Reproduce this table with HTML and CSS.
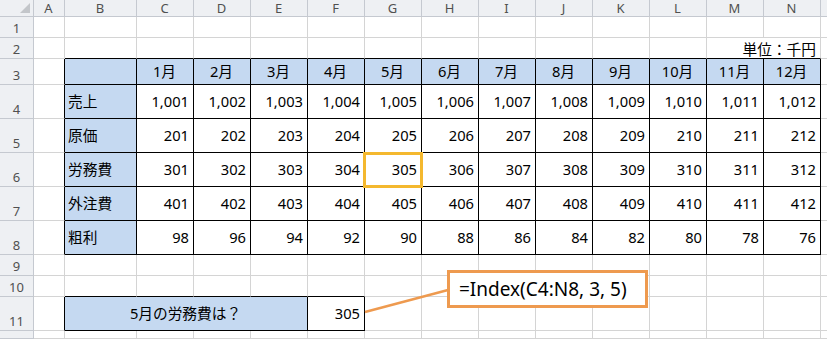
FILE: index.html
```html
<!DOCTYPE html>
<html lang="ja">

<head>
    <meta charset="UTF-8">
    <meta name="viewport" content="width=device-width, initial-scale=1.0">
    <title>INDEX関数</title>
    <link rel="stylesheet" href="styles.css">
</head>

<body>
    <div class="sheet" id="sheet">
        <svg class="leader" width="827" height="339">
            <line x1="365" y1="312" x2="448" y2="290" stroke="#EE9A4F" stroke-width="2.5" />
        </svg>
        <div class="callout">=Index(C4:N8, 3, 5)</div>
    </div>
    <script>
        const sheet = document.getElementById('sheet');
        const labels = ['売上', '原価', '労務費', '外注費', '粗利'];

        function add(text, cls) {
            const div = document.createElement('div');
            div.className = 'cell ' + cls;
            div.textContent = text;
            sheet.appendChild(div);
        }

        function value(row, i) {
            if (row == 4) return (1001 + i).toLocaleString('en-US');
            if (row == 8) return String(98 - 2 * i);
            return String((row - 3) * 100 + 1 + i);
        }

        // column headers
        add('', 'corner');
        'ABCDEFGHIJKLMN'.split('').concat(['']).forEach(l => add(l, 'col-head'));

        for (let r = 1; r <= 12; r++) {
            add(r < 12 ? r : '', 'row-head');
            for (let c = 0; c < 15; c++) {
                if (r == 2 && c == 13) continue;
                if (r == 11 && c >= 2 && c <= 4) continue;
                let text = '';
                let cls = '';
                if (r == 2 && c >= 1 && c <= 13) cls += ' edge-b';
                if (r == 10 && c >= 1 && c <= 5) cls += ' edge-b';
                if (((r >= 3 && r <= 8) || r == 11) && c == 0) cls += ' edge-r';
                if (r == 2 && c == 12) {
                    text = '単位：千円';
                    cls += ' unit span2';
                }
                if (r >= 3 && r <= 8 && c >= 1 && c <= 13) {
                    cls += ' box';
                    if (c == 1) {
                        cls += ' head';
                        text = r > 3 ? labels[r - 4] : '';
                    } else if (r == 3) {
                        cls += ' head center';
                        text = (c - 1) + '月';
                    } else {
                        cls += ' num';
                        text = value(r, c - 2);
                    }
                }
                if (r == 6 && c == 6) cls += ' selected';
                if (r == 11 && c == 1) {
                    cls += ' box head center span4';
                    text = '5月の労務費は？';
                }
                if (r == 11 && c == 5) {
                    cls += ' box num';
                    text = '305';
                }
                add(text, cls);
            }
        }
    </script>
</body>

</html>
```

FILE: styles.css
```css
* {
    box-sizing: border-box;
}

body {
    margin: 0;
    background-color: white;
    color: black;
    font-family: "Noto Sans", "Noto Sans CJK JP", sans-serif;
    font-size: 14.7px;
}

.sheet {
    position: relative;
    width: 827px;
    height: 339px;
    overflow: hidden;
    display: grid;
    grid-template-columns: 34px 31px 72px repeat(12, 57px) 1fr;
    grid-template-rows: 17px 21px 21px 26px repeat(5, 34px) 21px 21px 34px 1fr;
}

.cell {
    display: flex;
    align-items: center;
    padding: 0 4px 0 3px;
    white-space: nowrap;
    line-height: 1;
    border-right: 1px solid #d4d4d4;
    border-bottom: 1px solid #d4d4d4;
}

.corner,
.col-head,
.row-head {
    background-color: #eef0f3;
    border-color: #c5c9d0;
    color: #505050;
    font-size: 13px;
    justify-content: center;
}

.corner {
    position: relative;
}

.corner::after {
    content: '';
    position: absolute;
    right: 3px;
    bottom: 3px;
    border-style: solid;
    border-width: 0 0 10px 10px;
    border-color: transparent transparent #c3c6ca transparent;
}

.row-head {
    align-items: flex-end;
    padding: 0 0 2px;
}

.box {
    border-right-color: black;
    border-bottom-color: black;
}

.edge-r {
    border-right-color: black;
}

.edge-b {
    border-bottom-color: black;
}

.head {
    background-color: #c5d9f1;
}

.center {
    justify-content: center;
}

.num {
    justify-content: flex-end;
}

.unit {
    justify-content: flex-end;
    padding-top: 3px;
}

.span2 {
    grid-column: span 2;
}

.span4 {
    grid-column: span 4;
}

.selected {
    position: relative;
}

.selected::after {
    content: '';
    position: absolute;
    inset: -1px -2px -2px -2px;
    border: 3px solid #f4b82e;
    z-index: 1;
}

.leader {
    position: absolute;
    left: 0;
    top: 0;
    pointer-events: none;
    z-index: 2;
}

.callout {
    position: absolute;
    left: 447px;
    top: 270px;
    width: 201px;
    height: 38px;
    border: 3px solid #ee9a4f;
    background-color: white;
    display: flex;
    align-items: center;
    padding-left: 9px;
    font-size: 19px;
    z-index: 2;
}
```
